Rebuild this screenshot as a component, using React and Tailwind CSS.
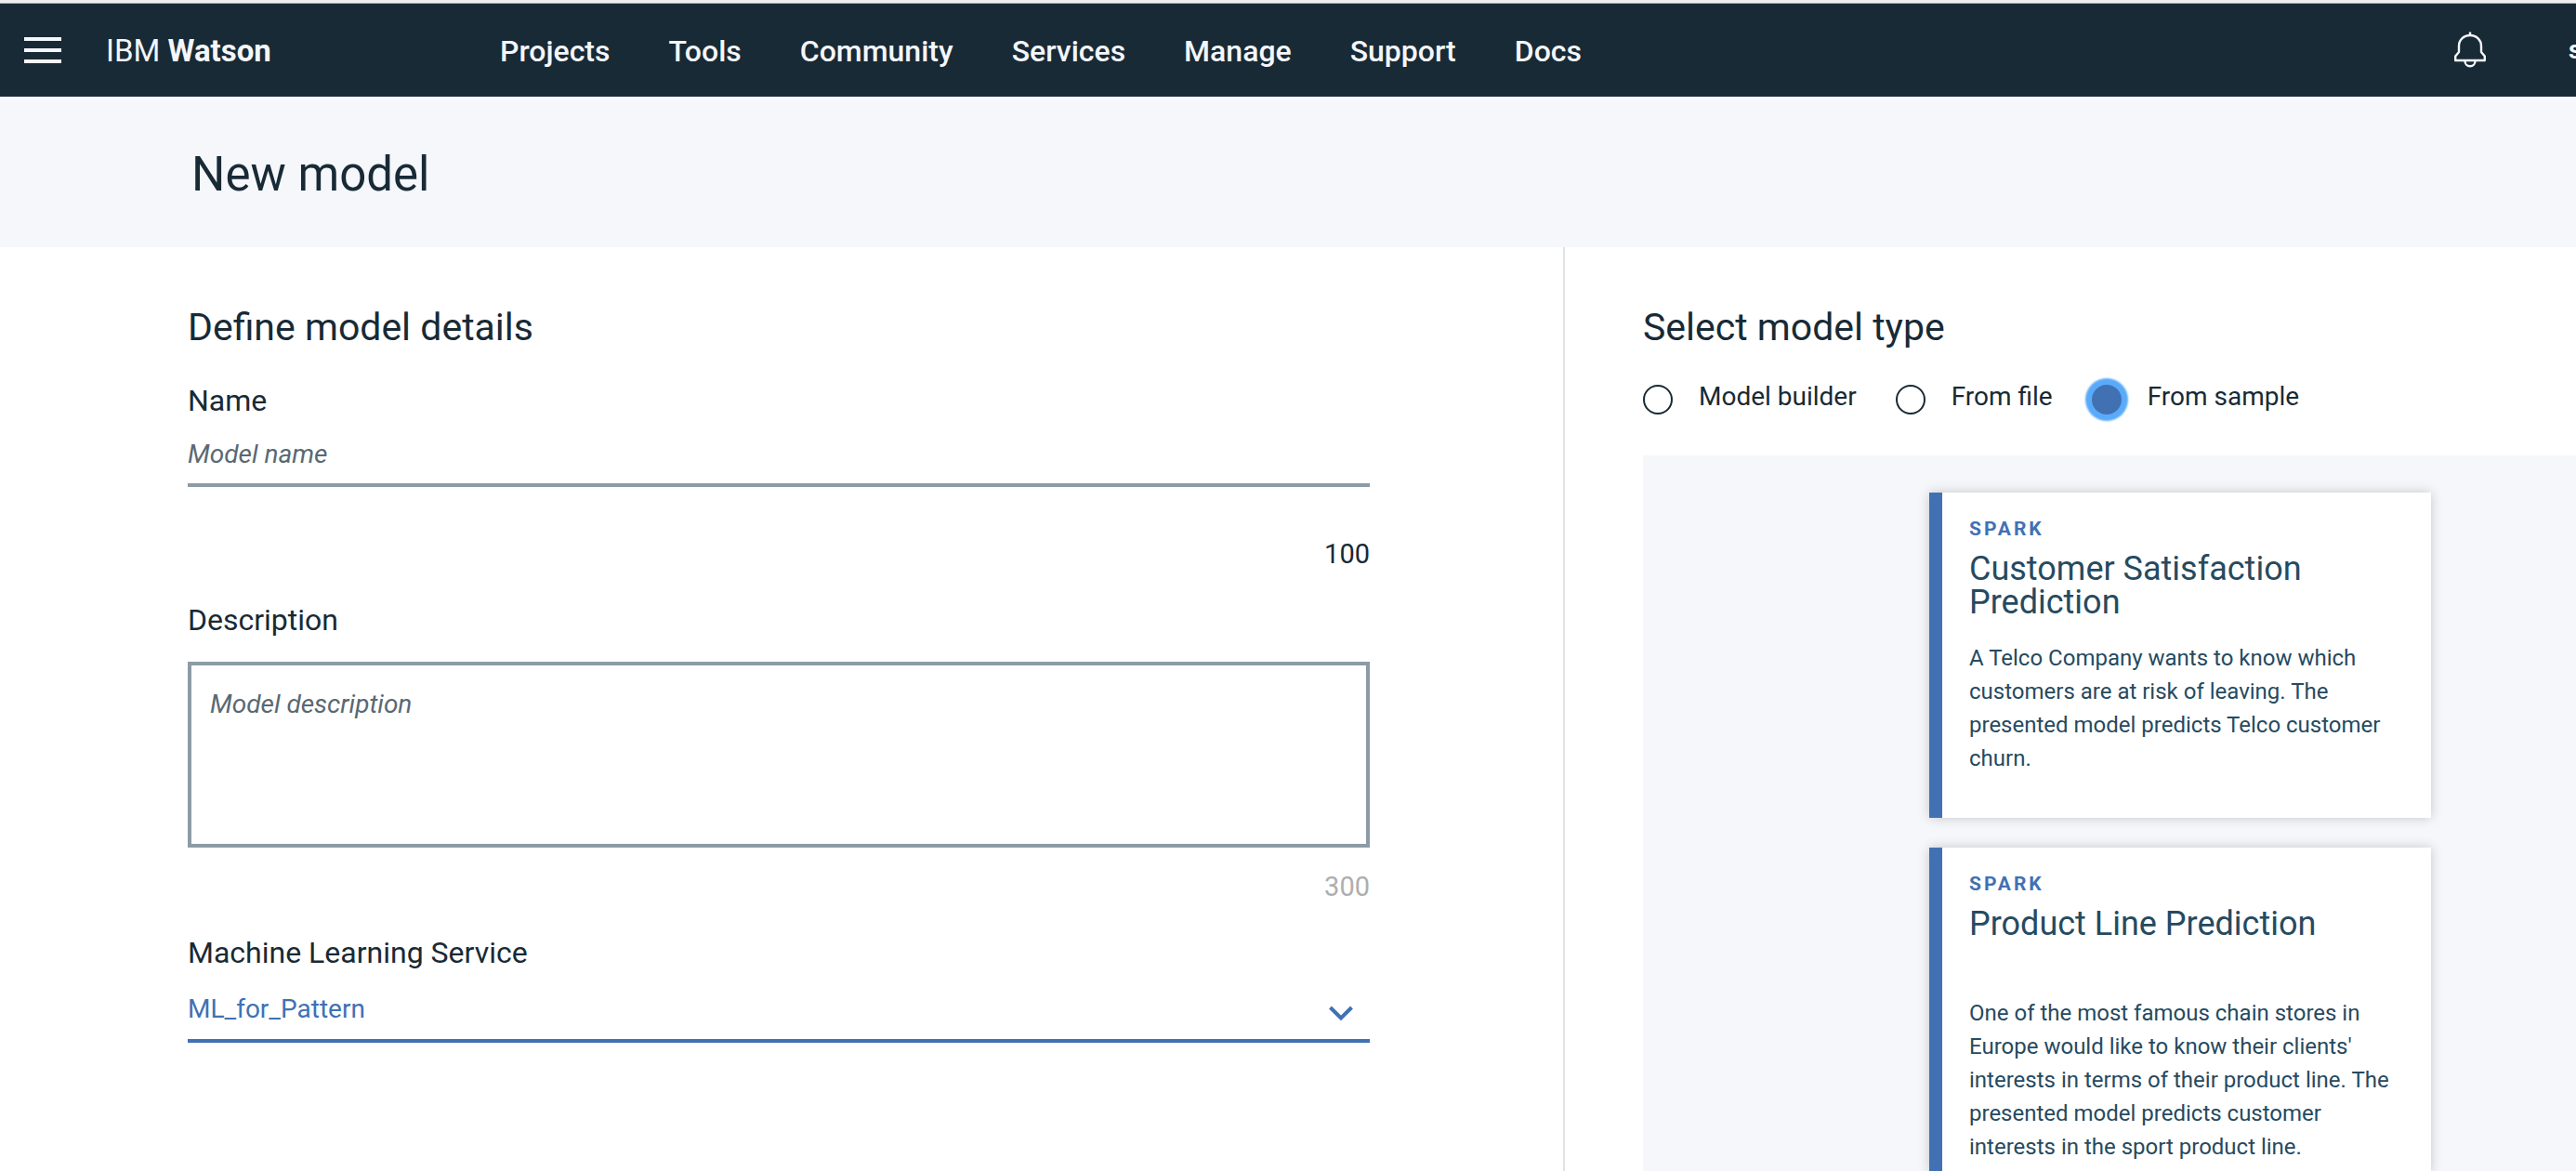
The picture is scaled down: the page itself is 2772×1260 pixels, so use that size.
import { useState } from "react";

const NAV = ["Projects", "Tools", "Community", "Services", "Manage", "Support", "Docs"];

const TYPES = [
  { id: "builder", label: "Model builder" },
  { id: "file", label: "From file" },
  { id: "sample", label: "From sample" },
];

const SAMPLES = [
  {
    title: "Customer Satisfaction Prediction",
    text: "A Telco Company wants to know which customers are at risk of leaving. The presented model predicts Telco customer churn.",
  },
  {
    title: "Product Line Prediction",
    text: "One of the most famous chain stores in Europe would like to know their clients' interests in terms of their product line. The presented model predicts customer interests in the sport product line.",
  },
];

function Bell() {
  return (
    <svg width="36" height="40" viewBox="0 0 36 40" fill="none" stroke="currentColor" strokeWidth="2.4" aria-hidden="true">
      <path d="M18 0.5V4" />
      <path d="M18 4C11 4 6 9 6 15.500V22L2.200 26.500V31H33.800V26.500L30 22V15.500C30 9 25 4 18 4Z" strokeLinejoin="round" />
      <path d="M12.500 31.500C12.500 35 15 37.300 18 37.300C21 37.300 23.500 35 23.500 31.500" />
    </svg>
  );
}

function Header() {
  return (
    <header className="flex h-[100px] items-center overflow-hidden bg-[#182a35] pl-[26px] text-[#f4f6fb]">
      <button type="button" aria-label="Menu" className="flex w-10 shrink-0 flex-col gap-2">
        <span className="h-1 w-full bg-current" />
        <span className="h-1 w-full bg-current" />
        <span className="h-1 w-full bg-current" />
      </button>
      <a href="#home" className="ml-12 w-[424px] shrink-0 pt-0.5 whitespace-nowrap text-[33px] leading-10">
        IBM <span className="font-bold">Watson</span>
      </a>
      <nav className="flex gap-[63px] pt-0.5 text-[32px] leading-10 font-medium">
        {NAV.map((n) => (
          <a key={n} href={"#" + n.toLowerCase()}>{n}</a>
        ))}
      </nav>
      <div className="ml-auto flex items-center gap-[88px]">
        <button type="button" aria-label="Notifications"><Bell /></button>
        <button type="button" aria-label="Account" className="w-2 text-left text-[28px] leading-8 font-bold">s</button>
      </div>
    </header>
  );
}

function DetailsForm() {
  return (
    <form className="pt-[62px] pr-[208px] pl-[202px]">
      <h2 className="text-[41px] leading-12">Define model details</h2>

      <label htmlFor="name" className="mt-[35px] block text-[32px] leading-10">Name</label>
      <input
        id="name"
        type="text"
        placeholder="Model name"
        className="mt-[5px] block h-[68px] w-full border-b-4 border-[#8c9ba5] text-[28px] outline-none placeholder:text-[#5a6872] placeholder:italic"
      />
      <p className="mt-[52px] text-right text-[29px] leading-10">100</p>

      <label htmlFor="description" className="mt-[31px] block text-[32px] leading-10">Description</label>
      <textarea
        id="description"
        placeholder="Model description"
        className="mt-[25px] block h-[200px] w-full resize-none border-4 border-[#8c9ba5] px-5 py-[22px] text-[28px] leading-10 outline-none placeholder:text-[#5a6872] placeholder:italic"
      />
      <p className="mt-[22px] text-right text-[29px] leading-10 text-[#aeaeae]">300</p>

      <label htmlFor="service" className="mt-[31px] block text-[32px] leading-10">Machine Learning Service</label>
      <div className="relative mt-[9px]">
        <select
          id="service"
          className="block h-[68px] w-full appearance-none border-b-4 border-[#4171b3] bg-transparent text-[28px] text-[#4171b3] outline-none"
        >
          <option>ML_for_Pattern</option>
        </select>
        <svg className="pointer-events-none absolute top-7 right-[18px]" width="26" height="18" viewBox="0 0 26 18" fill="none" stroke="#4171b3" strokeWidth="4" aria-hidden="true">
          <path d="M1.500 2L13 13.500L24.500 2" />
        </svg>
      </div>
    </form>
  );
}

function SampleCard({ title, text }) {
  return (
    <article className="min-h-[350px] w-[540px] border-l-[14px] border-[#4171b3] bg-white pt-[27px] pr-8 pl-[29px] text-[#264a60] shadow-[0_0_12px_rgba(0,0,0,0.2)]">
      <p className="text-[21px] leading-6 font-bold tracking-[3px] text-[#4171b3]">SPARK</p>
      <h3 className="mt-[13px] min-h-[72px] text-[36px] leading-9">{title}</h3>
      <p className="mt-6 text-[24px] leading-9">{text}</p>
    </article>
  );
}

function ModelType() {
  const [type, setType] = useState("sample");
  return (
    <section className="border-l-2 border-[#dfe3e6] pt-[62px] pl-[84px]">
      <h2 id="type-heading" className="text-[41px] leading-12">Select model type</h2>
      <div role="radiogroup" aria-labelledby="type-heading" className="mt-[34px] flex h-9 gap-[42px] text-[28px] leading-[34px]">
        {TYPES.map((t) => (
          <label key={t.id} className="flex items-start gap-7 whitespace-nowrap">
            <input
              type="radio"
              name="type"
              checked={type === t.id}
              onChange={() => setType(t.id)}
              className="mt-1 size-8 shrink-0 appearance-none rounded-full border-2 border-[#182a35] checked:border-[#4171b3] checked:bg-[#4171b3] checked:shadow-[0_0_2px_7px_#5aaafa]"
            />
            {t.label}
          </label>
        ))}
      </div>
      <div className="mt-11 flex min-h-full flex-col gap-8 bg-[#f5f7fb] pt-10 pl-[308px]">
        {SAMPLES.map((s) => (
          <SampleCard key={s.title} {...s} />
        ))}
      </div>
    </section>
  );
}

export default function App() {
  return (
    <div className="flex h-screen flex-col overflow-hidden bg-white font-['Roboto',sans-serif] text-[#182a35]">
      <div className="h-1 shrink-0 border-b border-[#a5aaae] bg-[#efefef]" />
      <div className="shrink-0"><Header /></div>
      <div className="flex h-[162px] shrink-0 items-center bg-[#f5f7fb] pt-1.5 pl-[206px]">
        <h1 className="text-[51px] leading-14">New model</h1>
      </div>
      <main className="grid grow grid-cols-[minmax(0,1682fr)_minmax(0,1090fr)]">
        <DetailsForm />
        <ModelType />
      </main>
    </div>
  );
}
